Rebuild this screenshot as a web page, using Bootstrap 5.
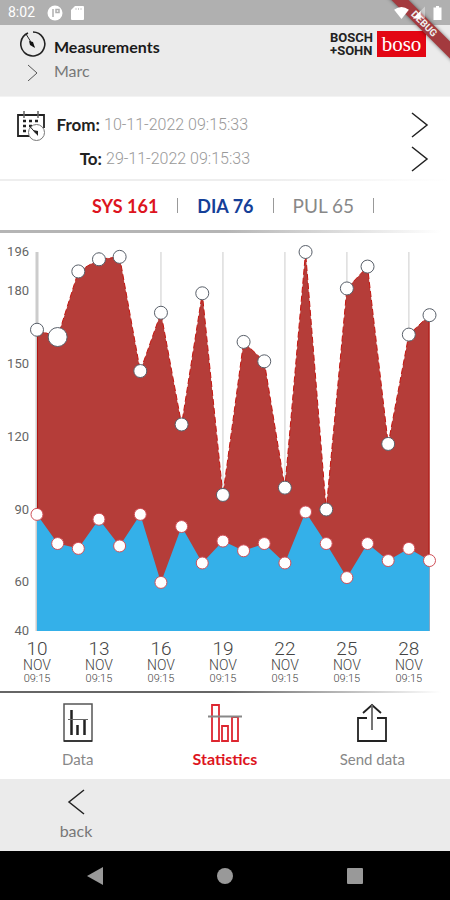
<!DOCTYPE html>
<html lang="en">
<head>
<meta charset="utf-8">
<meta name="viewport" content="width=device-width, initial-scale=1">
<title>Measurements – Statistics</title>
<link href="https://cdn.jsdelivr.net/npm/bootstrap@5.3.0/dist/css/bootstrap.min.css" rel="stylesheet">
<style>
body{font-family:Lato,"Open Sans",sans-serif;font-size:15px;line-height:20px;color:#222;background:#fff}
button,a{font:inherit}
svg{display:block;flex:none}
.status-strip{background:#b0b0b0;color:#fff;height:25px;font:400 14px/25px Roboto,sans-serif}
.gray-zone{background:#ebebeb}
.app-head{height:72px;border-bottom:1px solid #f3f3f3}
.app-title{font-size:16px;font-weight:700;color:#1a1a1a}
.user-link{color:#777;font-size:16px}
.brand-pair{padding-top:6px}
.brand-words{font:700 13px/13px "Liberation Sans Narrow",Roboto,sans-serif;color:#222}
.brand-box{background:#e30613;color:#fff;font:400 21px/26px "Liberation Serif",serif;width:49px;height:26px}
.ribbon-clip{width:80px;height:80px;overflow:hidden;pointer-events:none}
.ribbon{left:-6px;top:18px;width:120px;height:12px;background:#a33a3e;color:#eee;font:700 10px/12px Roboto,sans-serif;transform:rotate(45deg);box-shadow:0 0 4px #0008}
.status-icons{z-index:3}
.date-zone{padding-top:11px;padding-bottom:3px}
.date-row{height:34px}
.date-label{width:54px;font-weight:700;font-size:17px;color:#222}
.date-value{font-family:Roboto,sans-serif;font-size:16px;font-weight:300;color:#999}
.thin-rule{height:2px;background:linear-gradient(90deg,#eee 60%,#fff)}
.mid-rule{height:3px;background:linear-gradient(90deg,#b5b5b5 50%,#fff 98%)}
.dark-rule{height:2px;background:linear-gradient(90deg,#666 50%,#fff 98%)}
.totals{height:49px;gap:19px;font-size:18px;color:#999}
.sys{color:#dd1420;font-weight:700}
.dia{color:#153f98;font-weight:700}
.pul{color:#888;font-size:19px}
.bar-sep{width:1px;height:15px;background:#999}
.plot text{font-family:Roboto,sans-serif;font-weight:300;fill:#444}
.plot .ylab{font-size:13px;font-weight:400;fill:#666}
.plot .xday{font-size:19px}
.plot .xmon{font-size:14px}
.plot .xtime{font-size:11px}
.tab-zone{height:86px}
.tab-zone a{color:#888;text-decoration:none}
.tab-zone a.current{color:#dd1420;font-size:16px;font-weight:700}
.back-zone{min-height:72px}
.back-zone button{color:#777;width:72px}
.sys-nav{background:#000;height:49px}
.sys-nav button{width:130px;height:49px}
</style>
<script src="https://cdn.jsdelivr.net/npm/bootstrap@5.3.0/dist/js/bootstrap.bundle.min.js"></script>
</head>
<body class="d-flex flex-column min-vh-100 position-relative overflow-x-hidden">
<div class="status-strip d-flex align-items-center ps-2 pe-2">
  <span>8:02</span>
  <svg class="ms-2 ps-1" width="20" height="16" viewBox="0 0 16 16" aria-hidden="true"><circle cx="8" cy="8" r="7.500" fill="#fff"/><path d="M6 4v8M9 4.500h3v3h-3z" stroke="#b0b0b0" stroke-width="1.500" fill="none"/></svg>
  <svg class="ms-2" width="13" height="14" viewBox="0 0 13 14" aria-hidden="true"><path d="M4 0h8q1 0 1 1v12q0 1-1 1H1q-1 0-1-1V4z" fill="#fff"/><path d="M5 2v2M7.500 2v2M10 2v2" stroke="#ccc"/></svg>
  <div class="status-icons position-relative ms-auto d-flex align-items-center">
    <svg width="15" height="12" viewBox="0 0 16 13" aria-hidden="true"><path d="M0 3Q8-3 16 3L8 13z" fill="#fff"/></svg>
    <svg class="ms-1" width="12" height="13" viewBox="0 0 14 14" aria-hidden="true"><path d="M0 14L14 0V14z" fill="#fff" opacity=".4"/><path d="M0 14L9 5V14z" fill="#fff"/></svg>
    <svg class="ms-1 ps-1" width="13" height="14" viewBox="0 0 9 14" aria-hidden="true"><path d="M3 0h3v1.500h2.500V14H.5V1.500H3z" fill="#fff"/></svg>
  </div>
</div>
<div class="ribbon-clip position-absolute top-0 end-0"><div class="ribbon position-absolute text-center">DEBUG</div></div>

<header class="app-head gray-zone d-flex justify-content-between align-items-start">
  <div class="d-flex flex-column ps-3 pt-1">
    <div class="d-flex align-items-center gap-2">
      <svg class="ms-1" width="26" height="28" viewBox="0 0 26 28" fill="none" stroke="#222" aria-hidden="true"><path d="M8 4A12 12 0 1 0 13 3" stroke-width="1.600"/><path d="M6 5l8 13" stroke-width="1"/><path d="M9 12l4 1 2 6-5-3z" fill="#111" stroke="none"/></svg>
      <h1 class="app-title mb-0 mt-2">Measurements</h1>
    </div>
    <a href="#" class="user-link d-flex align-items-center text-decoration-none pt-1"><svg class="ms-2 me-3" width="14" height="20" viewBox="0 0 14 20" fill="none" stroke="#555" aria-hidden="true"><path d="M4 4l9 8-9 8"/></svg>Marc</a>
  </div>
  <div class="brand-pair d-flex gap-1 pe-4">
    <div class="brand-words">BOSCH<br>+SOHN</div>
    <div class="brand-box text-center">boso</div>
  </div>
</header>

<section class="date-zone">
  <div class="date-row d-flex align-items-center ps-3 pe-3">
    <svg width="30" height="33" viewBox="0 0 30 33" fill="none" stroke="#222" aria-hidden="true"><path d="M20 27H2V6h26v13" stroke-width="1.800"/><path d="M8 2v7M22 2v7" stroke="#666" stroke-width="1.500"/><path d="M7 12h3M13 12h3M19 12h3M7 17h3M13 17h3M7 22h3" stroke-width="2.600"/><circle cx="20.500" cy="23.500" r="8" fill="#fff" stroke="#777"/><path d="M14 17.500l6 7"/><path d="M17 21l5 1v5z" fill="#222" stroke="none"/></svg>
    <span class="date-label text-end me-1">From:</span><span class="date-value">10-11-2022 09:15:33</span>
    <button class="btn p-0 border-0 ms-auto me-1" aria-label="Change start date"><svg width="20" height="28" viewBox="0 0 20 28" fill="none" stroke="#222" stroke-width="1.500" aria-hidden="true"><path d="M2 2l15 12L2 26"/></svg></button>
  </div>
  <div class="date-row d-flex align-items-center ps-3 pe-3">
    <span class="ps-4 pe-2"></span>
    <span class="date-label text-end me-1">To:</span><span class="date-value">29-11-2022 09:15:33</span>
    <button class="btn p-0 border-0 ms-auto me-1" aria-label="Change end date"><svg width="20" height="28" viewBox="0 0 20 28" fill="none" stroke="#222" stroke-width="1.500" aria-hidden="true"><path d="M2 2l15 12L2 26"/></svg></button>
  </div>
</section>
<div class="thin-rule"></div>
<div class="totals d-flex justify-content-center align-items-center ps-3">
  <span class="sys">SYS 161</span><span class="bar-sep"></span><span class="dia">DIA 76</span><span class="bar-sep"></span><span class="pul">PUL 65</span><span class="bar-sep"></span>
</div>
<div class="mid-rule"></div>

<main><svg class="plot w-100" id="plot" viewBox="0 0 450 458" role="img" aria-label="Systolic and diastolic pressure, 10 to 29 November"></svg></main>

<div class="dark-rule"></div>
<nav class="tab-zone row g-0 text-center" aria-label="Views">
  <a href="#" class="col d-flex flex-column align-items-center pt-2 ps-1">
    <svg width="32" height="44" viewBox="0 0 32 44" fill="none" stroke="#222" aria-hidden="true"><rect x="2" y="3" width="28" height="37" stroke="#555" stroke-width="1.500"/><path d="M2 40h28" stroke-width="1.500"/><path d="M9.500 9v25M15.500 24v10M22.500 19v15" stroke-width="2.500"/><path d="M6 18.500h20" stroke="#666"/></svg><span class="pt-1">Data</span></a>
  <a href="#" class="col current d-flex flex-column align-items-center pt-2" aria-current="page">
    <svg width="36" height="44" viewBox="0 0 36 44" fill="none" stroke="#dd2630" stroke-width="1.800" aria-hidden="true"><path d="M5 4h7v36H5zM15 25h6v15h-6zM25 16h6v24h-6z"/><path d="M1 15.500h34" stroke="#888"/></svg><span class="pt-1">Statistics</span></a>
  <a href="#" class="col d-flex flex-column align-items-center pt-2 pe-1">
    <svg width="32" height="44" viewBox="0 0 32 44" fill="none" stroke="#222" stroke-width="1.800" aria-hidden="true"><path d="M11 17H2v23h28V17h-9M7 12l9-8 9 8"/><path d="M16 4v25" stroke="#666"/></svg><span class="pt-1">Send data</span></a>
</nav>
<div class="back-zone gray-zone flex-grow-1 ps-4">
  <button class="btn p-0 border-0 rounded-0 ms-3 mt-2 d-flex flex-column align-items-center"><svg width="20" height="28" viewBox="0 0 20 28" fill="none" stroke="#222" stroke-width="1.500" aria-hidden="true"><path d="M18 3L3 15l15 12"/></svg><span class="pt-1">back</span></button>
</div>
<div class="sys-nav d-flex justify-content-center">
  <button class="btn p-0 border-0 d-flex justify-content-center align-items-center" aria-label="Back"><svg width="18" height="18" viewBox="0 0 18 18" aria-hidden="true"><path d="M1 9L17 0v18z" fill="#999"/></svg></button>
  <button class="btn p-0 border-0 d-flex justify-content-center align-items-center" aria-label="Home"><svg width="18" height="18" viewBox="0 0 18 18" aria-hidden="true"><circle cx="9" cy="9" r="8" fill="#999"/></svg></button>
  <button class="btn p-0 border-0 d-flex justify-content-center align-items-center" aria-label="Recent apps"><svg width="18" height="18" viewBox="0 0 18 18" aria-hidden="true"><rect x="1" y="1" width="16" height="16" rx="1" fill="#999"/></svg></button>
</div>
<script>
const sys=[164,161,188,193,194,147,171,125,179,96,159,151,99,196,90,181,190,117,162,170];
const dia=[88,76,74,86,75,88,60,83,68,77,73,76,68,89,76,62,76,69,74,69];
const left=37,right=429.5,top0=19,bottom=398;
const x=i=>left+(right-left)*i/19, y=v=>bottom-(v-40)*(bottom-top0)/156;
const line=d=>d.map((v,i)=>`${x(i)},${y(v)}`).join(' ');
const area=(d,fill)=>`<polygon fill="${fill}" points="${left},${bottom} ${line(d)} ${right},${bottom}"/>`;
let out='';
for(let i=0;i<20;i+=3)out+=`<path d="M${x(i)} ${top0}V${bottom}" stroke="${i?'#ddd':'#ccc'}" stroke-width="${i?1.5:3}"/>`;
out+=area(sys,'#b53d39');
out+=`<polyline points="${line(sys)}" fill="none" stroke="#c4150f" stroke-width="1" stroke-dasharray="6 3"/>`;
out+=`<path d="M${left+.5} ${y(sys[0])}V${y(dia[0])}M${right-.5} ${y(sys[19])}V${y(dia[19])}" stroke="#b01510"/>`;
out+=area(dia,'#34b0e9');
sys.forEach((v,i)=>out+=`<circle cx="${x(i)}" cy="${y(v)}" r="${i===1?9.5:6.5}" fill="#fff" stroke="#59606a"/>`);
dia.forEach((v,i)=>out+=`<circle cx="${x(i)}" cy="${y(v)}" r="6" fill="#fff" stroke="#cf5058"/>`);
[196,180,150,120,90,60,40].forEach(v=>out+=`<text class="ylab" x="29" y="${y(v)+4}" text-anchor="end">${v}</text>`);
for(let i=0;i<20;i+=3)out+=`<g text-anchor="middle"><text class="xday" x="${x(i)}" y="422">${10+i}</text><text class="xmon" x="${x(i)}" y="437">NOV</text><text class="xtime" x="${x(i)}" y="449">09:15</text></g>`;
document.getElementById('plot').innerHTML=out;
</script>
</body>
</html>
